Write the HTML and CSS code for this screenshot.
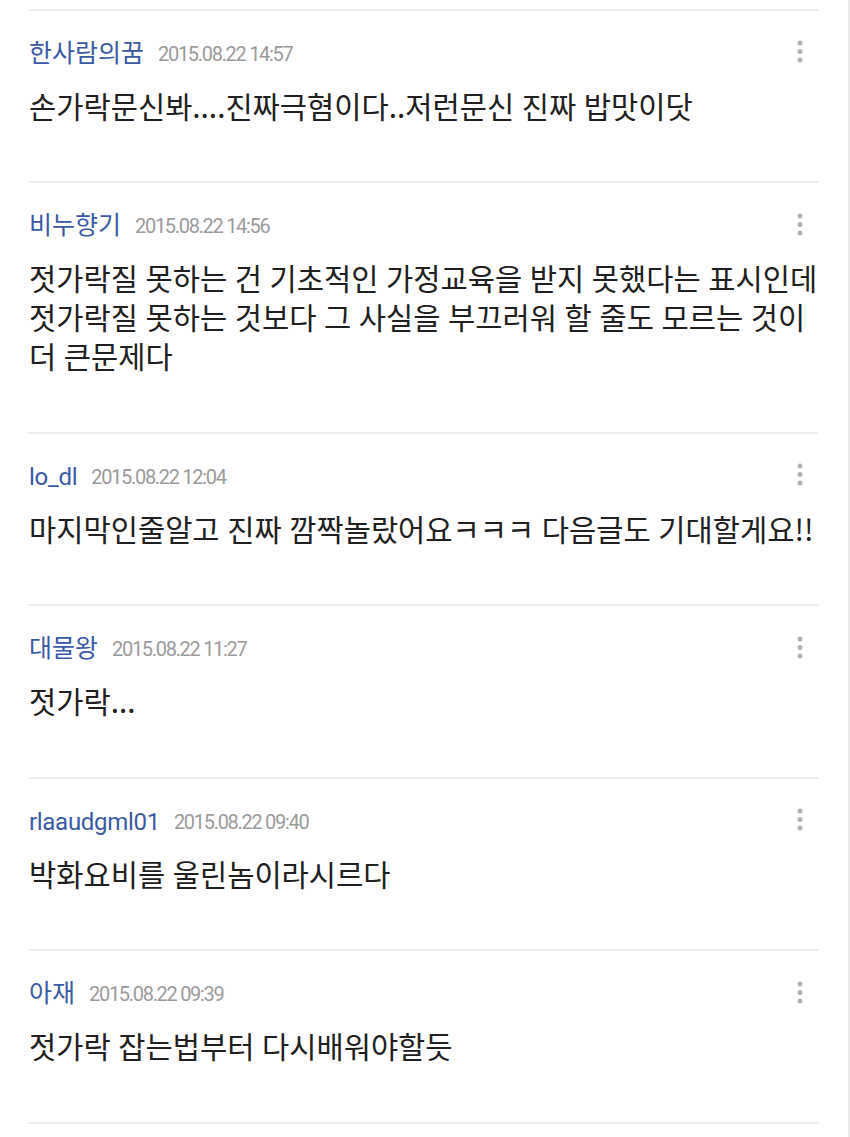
FILE: index.html
```html
<!DOCTYPE html>
<html lang="ko">
<head>
<meta charset="utf-8">
<title>댓글</title>
<link rel="stylesheet" href="styles.css">
</head>
<body>
<div class="page">
  <ul class="list">
    <li class="comment">
      <div class="head">
        <span class="name">한사람의꿈</span>
        <span class="date">2015.08.22 14:57</span>
        <span class="more"><svg width="6" height="23" viewBox="0 0 6 23"><circle cx="3" cy="3" r="2.5"/><circle cx="3" cy="11.5" r="2.5"/><circle cx="3" cy="20" r="2.5"/></svg></span>
      </div>
      <p class="text">손가락문신봐....진짜극혐이다..저런문신 진짜 밥맛이닷</p>
    </li>
    <li class="comment">
      <div class="head">
        <span class="name">비누향기</span>
        <span class="date">2015.08.22 14:56</span>
        <span class="more"><svg width="6" height="23" viewBox="0 0 6 23"><circle cx="3" cy="3" r="2.5"/><circle cx="3" cy="11.5" r="2.5"/><circle cx="3" cy="20" r="2.5"/></svg></span>
      </div>
      <p class="text">젓가락질 못하는 건 기초적인 가정교육을 받지 못했다는 표시인데<br>젓가락질 못하는 것보다 그 사실을 부끄러워 할 줄도 모르는 것이<br>더 큰문제다</p>
    </li>
    <li class="comment">
      <div class="head">
        <span class="name latin">lo_dl</span>
        <span class="date">2015.08.22 12:04</span>
        <span class="more"><svg width="6" height="23" viewBox="0 0 6 23"><circle cx="3" cy="3" r="2.5"/><circle cx="3" cy="11.5" r="2.5"/><circle cx="3" cy="20" r="2.5"/></svg></span>
      </div>
      <p class="text">마지막인줄알고 진짜 깜짝놀랐어요ㅋㅋㅋ 다음글도 기대할게요!!</p>
    </li>
    <li class="comment">
      <div class="head">
        <span class="name">대물왕</span>
        <span class="date">2015.08.22 11:27</span>
        <span class="more"><svg width="6" height="23" viewBox="0 0 6 23"><circle cx="3" cy="3" r="2.5"/><circle cx="3" cy="11.5" r="2.5"/><circle cx="3" cy="20" r="2.5"/></svg></span>
      </div>
      <p class="text">젓가락...</p>
    </li>
    <li class="comment">
      <div class="head">
        <span class="name latin">rlaaudgml01</span>
        <span class="date">2015.08.22 09:40</span>
        <span class="more"><svg width="6" height="23" viewBox="0 0 6 23"><circle cx="3" cy="3" r="2.5"/><circle cx="3" cy="11.5" r="2.5"/><circle cx="3" cy="20" r="2.5"/></svg></span>
      </div>
      <p class="text">박화요비를 울린놈이라시르다</p>
    </li>
    <li class="comment">
      <div class="head">
        <span class="name">아재</span>
        <span class="date">2015.08.22 09:39</span>
        <span class="more"><svg width="6" height="23" viewBox="0 0 6 23"><circle cx="3" cy="3" r="2.5"/><circle cx="3" cy="11.5" r="2.5"/><circle cx="3" cy="20" r="2.5"/></svg></span>
      </div>
      <p class="text">젓가락 잡는법부터 다시배워야할듯</p>
    </li>
    <li class="comment last"></li>
  </ul>
</div>
</body>
</html>
```

FILE: styles.css
```css
html, body {
  margin: 0;
  padding: 0;
  background: #ffffff;
}

.page {
  box-sizing: border-box;
  width: 850px;
  min-height: 1137px;
  border-right: 2px solid #e9e9e9;
  padding-top: 8.5px;
}

.list {
  list-style: none;
  margin: 0;
  padding: 0 30px 0 28px;
}

.comment {
  border-top: 2px solid #ededed;
  padding: 28px 0 56.5px 1px;
}

.comment.last {
  padding: 0;
}

.head {
  display: flex;
  align-items: center;
  height: 30px;
  font-family: Roboto, "Noto Sans CJK KR", sans-serif;
}

.name {
  font-size: 25px;
  letter-spacing: 0;
  color: #3a5aa6;
  line-height: 30px;
}

.name.latin {
  font-size: 24px;
  letter-spacing: -0.3px;
}

.date {
  margin-left: 14px;
  font-size: 20px;
  letter-spacing: -1.3px;
  color: #9b9b9b;
  line-height: 30px;
}

.more {
  margin-left: auto;
  margin-right: 15px;
  margin-top: -4px;
  display: flex;
}

.more svg {
  fill: #b3b3b3;
}

.text {
  margin: 17px 0 0;
  font-family: "Noto Sans CJK KR", sans-serif;
  font-size: 29.6px;
  word-spacing: -0.7px;
  line-height: 39px;
  color: #202020;
  white-space: nowrap;
}
```
